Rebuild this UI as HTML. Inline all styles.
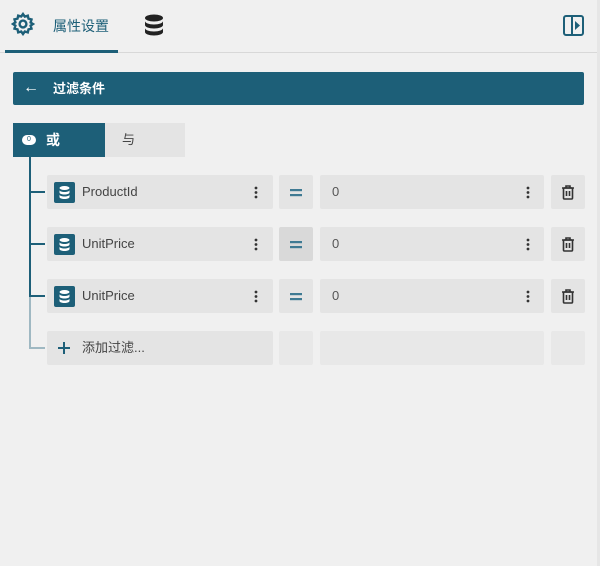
<!DOCTYPE html><html><head><meta charset="utf-8"><style>
*{margin:0;padding:0;box-sizing:border-box}
body{width:600px;height:566px;background:#f0f0f0;font-family:"Liberation Sans","Noto Sans CJK SC",sans-serif;position:relative;overflow:hidden;color:#333}
.a{position:absolute}
.box{position:absolute;background:#e4e4e4;border-radius:2px}
.t{font-size:13px;color:#444;line-height:16px}
</style></head><body>
<div class="a" style="left:597px;top:0;width:3px;height:566px;background:#e6e6e6"></div>
<div class="a" style="left:0;top:52px;width:597px;height:1px;background:#d8d8d8"></div>
<div class="a" style="left:5px;top:50px;width:113px;height:3px;background:#1d5f78"></div>
<svg class="a" style="left:11px;top:12px" width="24" height="24" viewBox="0 0 24 24" fill="none" stroke="#1d5f78" stroke-width="2.4"><circle cx="12" cy="12" r="3.4"/><path d="M12 2l1.8 2.6 3-.9.7 3 3 .8-.9 3L22 12l-2.4 1.6.9 3-3 .8-.7 3-3-.9L12 22l-1.8-2.5-3 .9-.7-3-3-.8.9-3L2 12l2.4-1.6-.9-3 3-.8.7-3 3 .9z"/></svg>
<div class="a" style="left:53px;top:17px;font-size:14px;line-height:18px;color:#1d5f78">属性设置</div>
<svg class="a" style="left:144px;top:14px" width="20" height="22" viewBox="0 0 20 22"><ellipse cx="10" cy="4" rx="9" ry="3.5" fill="#222"/><path d="M1 7c0 2 4 3.5 9 3.5s9-1.5 9-3.5v4c0 2-4 3.5-9 3.5S1 13 1 11z" fill="#222"/><path d="M1 14c0 2 4 3.5 9 3.5s9-1.5 9-3.5v4c0 2-4 3.5-9 3.5S1 20 1 18z" fill="#222"/></svg>
<svg class="a" style="left:563px;top:15px" width="21" height="21" viewBox="0 0 21 21"><rect x="1" y="1" width="19" height="19" rx="2" fill="none" stroke="#1d5f78" stroke-width="2"/><rect x="8" y="1" width="2" height="19" fill="#1d5f78"/><path d="M12 6l5 4.5-5 4.5z" fill="#1d5f78"/></svg>
<div class="a" style="left:13px;top:72px;width:571px;height:33px;background:#1d5f78;border-radius:2px"></div>
<div class="a" style="left:23px;top:79px;color:#fff;font-size:16px;line-height:18px">←</div>
<div class="a" style="left:53px;top:80px;color:#fff;font-size:13px;line-height:17px;font-weight:bold">过滤条件</div>
<div class="a" style="left:13px;top:123px;width:92px;height:34px;background:#1d5f78"></div>
<div class="a" style="left:22px;top:135px;width:14px;height:10px;border-radius:5px;background:#fff;font-size:7px;color:#1d5f78;text-align:center;line-height:10px">0</div>
<div class="a" style="left:46px;top:131px;color:#fff;font-size:14px;line-height:18px;font-weight:bold">或</div>
<div class="a" style="left:105px;top:123px;width:80px;height:34px;background:#e4e4e4"></div>
<div class="a" style="left:122px;top:131px;font-size:13px;line-height:17px;color:#444">与</div>
<div class="a" style="left:29px;top:157px;width:2px;height:140px;background:#1d5f78"></div>
<div class="a" style="left:29px;top:297px;width:2px;height:51px;background:#9fb8c2"></div>
<div class="a" style="left:29px;top:191px;width:16px;height:2px;background:#1d5f78"></div>
<div class="a" style="left:29px;top:243px;width:16px;height:2px;background:#1d5f78"></div>
<div class="a" style="left:29px;top:295px;width:16px;height:2px;background:#1d5f78"></div>
<div class="a" style="left:29px;top:347px;width:16px;height:2px;background:#9fb8c2"></div>
<div class="box" style="left:47px;top:175px;width:226px;height:34px"></div>
<div class="box" style="left:279px;top:175px;width:34px;height:34px"></div>
<div class="box" style="left:320px;top:175px;width:224px;height:34px"></div>
<div class="box" style="left:551px;top:175px;width:34px;height:34px"></div>
<div class="box" style="left:47px;top:227px;width:226px;height:34px"></div>
<div class="box" style="left:279px;top:227px;width:34px;height:34px;background:#d9d9d9"></div>
<div class="box" style="left:320px;top:227px;width:224px;height:34px"></div>
<div class="box" style="left:551px;top:227px;width:34px;height:34px"></div>
<div class="box" style="left:47px;top:279px;width:226px;height:34px"></div>
<div class="box" style="left:279px;top:279px;width:34px;height:34px"></div>
<div class="box" style="left:320px;top:279px;width:224px;height:34px"></div>
<div class="box" style="left:551px;top:279px;width:34px;height:34px"></div>
<div class="box" style="left:47px;top:331px;width:226px;height:34px"></div>
<div class="box" style="left:279px;top:331px;width:34px;height:34px;background:#e8e8e8"></div>
<div class="box" style="left:320px;top:331px;width:224px;height:34px;background:#e8e8e8"></div>
<div class="box" style="left:551px;top:331px;width:34px;height:34px;background:#e8e8e8"></div>

<svg width="0" height="0" style="position:absolute"><defs>
<g id="db"><rect width="21" height="21" rx="2" fill="#1d5f78"/><ellipse cx="10.5" cy="6" rx="5" ry="2" fill="#fff"/><path d="M5.5 8c0 1.2 2.2 2 5 2s5-.8 5-2v2.5c0 1.2-2.2 2-5 2s-5-.8-5-2z" fill="#fff"/><path d="M5.5 12.5c0 1.2 2.2 2 5 2s5-.8 5-2V15c0 1.2-2.2 2-5 2s-5-.8-5-2z" fill="#fff"/></g>
<g id="dots" fill="#333"><circle cx="2" cy="2" r="1.4"/><circle cx="2" cy="6.5" r="1.4"/><circle cx="2" cy="11" r="1.4"/></g>
<g id="tr" fill="none" stroke="#333" stroke-width="1.6"><path d="M1 3h12M5 3V1h4v2"/><rect x="2.5" y="3" width="9" height="11" rx="1"/><path d="M5.5 6v5M8.5 6v5"/></g>
<g id="eq" fill="#3f7a93"><rect width="12" height="2.2"/><rect y="5" width="12" height="2.2"/></g>
</defs></svg>
<svg class="a" style="left:54px;top:182px" width="21" height="21"><use href="#db"/></svg>
<svg class="a" style="left:54px;top:234px" width="21" height="21"><use href="#db"/></svg>
<svg class="a" style="left:54px;top:286px" width="21" height="21"><use href="#db"/></svg>
<div class="a t" style="left:82px;top:184px">ProductId</div>
<div class="a t" style="left:82px;top:236px">UnitPrice</div>
<div class="a t" style="left:82px;top:288px">UnitPrice</div>
<svg class="a" style="left:254px;top:186px" width="4" height="13"><use href="#dots"/></svg>
<svg class="a" style="left:254px;top:238px" width="4" height="13"><use href="#dots"/></svg>
<svg class="a" style="left:254px;top:290px" width="4" height="13"><use href="#dots"/></svg>
<svg class="a" style="left:290px;top:189px" width="12" height="8"><use href="#eq"/></svg>
<svg class="a" style="left:290px;top:241px" width="12" height="8"><use href="#eq"/></svg>
<svg class="a" style="left:290px;top:293px" width="12" height="8"><use href="#eq"/></svg>
<div class="a t" style="left:332px;top:184px;color:#555">0</div>
<div class="a t" style="left:332px;top:236px;color:#555">0</div>
<div class="a t" style="left:332px;top:288px;color:#555">0</div>
<svg class="a" style="left:526px;top:186px" width="4" height="13"><use href="#dots"/></svg>
<svg class="a" style="left:526px;top:238px" width="4" height="13"><use href="#dots"/></svg>
<svg class="a" style="left:526px;top:290px" width="4" height="13"><use href="#dots"/></svg>
<svg class="a" style="left:561px;top:185px" width="14" height="15"><use href="#tr"/></svg>
<svg class="a" style="left:561px;top:237px" width="14" height="15"><use href="#tr"/></svg>
<svg class="a" style="left:561px;top:289px" width="14" height="15"><use href="#tr"/></svg>
<svg class="a" style="left:58px;top:342px" width="12" height="12"><path d="M6 0v12M0 6h12" stroke="#1d5f78" stroke-width="2"/></svg>
<div class="a t" style="left:82px;top:340px">添加过滤...</div>
</body></html>
